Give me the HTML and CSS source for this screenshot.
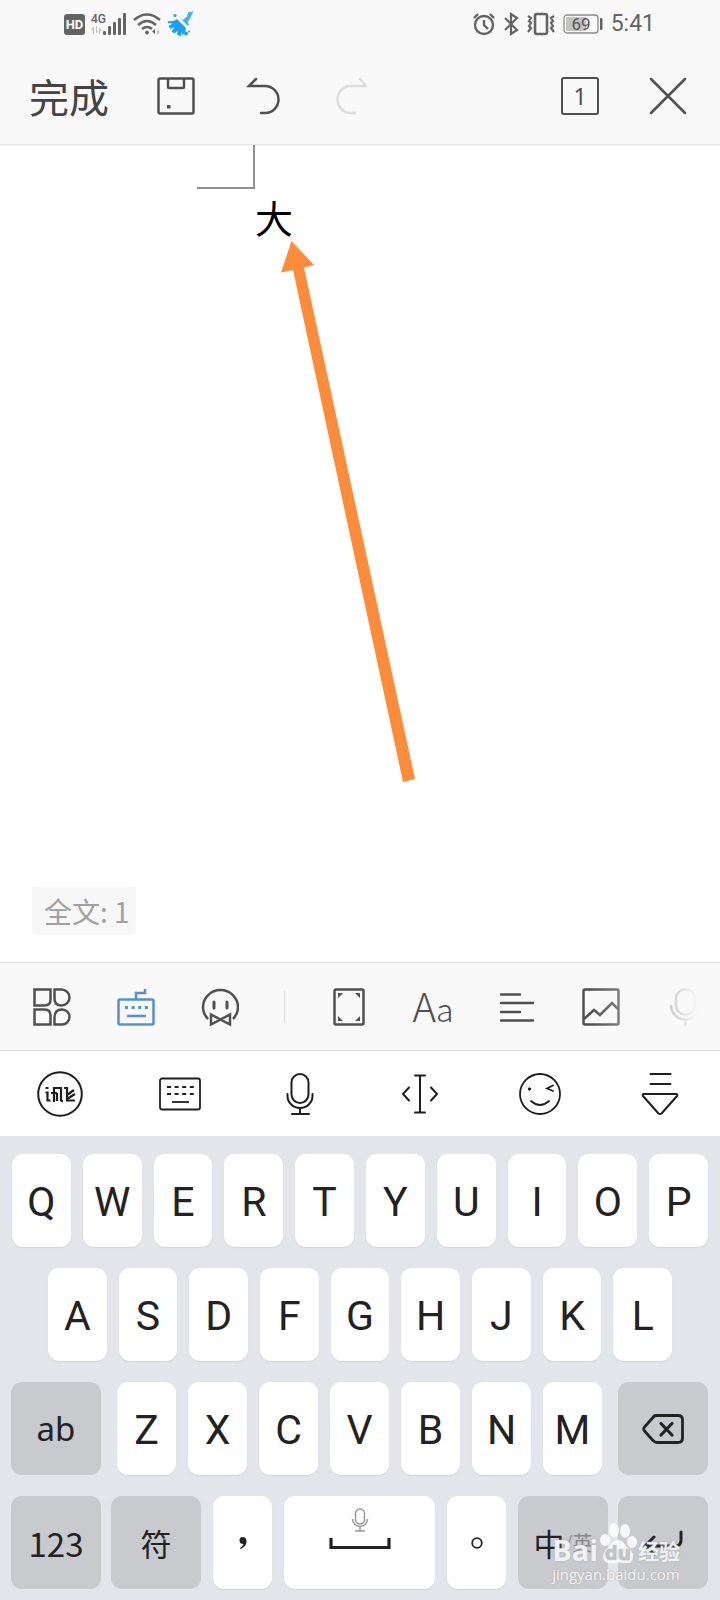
FILE: index.html
```html
<!DOCTYPE html>
<html lang="zh-CN">
<head>
<meta charset="utf-8">
<meta name="viewport" content="width=device-width, initial-scale=1">
<title>文档编辑</title>
<link rel="stylesheet" href="styles.css">
</head>
<body>
<div class="screen">
  <header class="header">
    <div class="status">
      <div class="status-left">
        <span class="hd">HD</span>
        <svg width="36" height="24" viewBox="0 0 36 24" fill="#646464"><text x="0" y="11" font-family="Roboto" font-weight="500" font-size="12">4G</text><g fill="#c4c4c4"><path d="M3 14v8H2v-4H0zM5 14v8l2-3H6v-5zM8 15v7h1v-3h2z"/></g><rect x="12" y="19" width="3" height="4" rx="1"/><rect x="17" y="14" width="3" height="9" rx="1"/><rect x="22" y="10" width="3" height="13" rx="1"/><rect x="27" y="6" width="3" height="17" rx="1"/><rect x="32" y="1" width="3" height="22" rx="1"/></svg>
        <svg width="28" height="24" viewBox="0 0 28 24" fill="none" stroke="#646464" stroke-width="2.400"><path d="M1 8Q14-3 27 8M5 13Q14 5 23 13M9 17Q14 13 19 17"/><circle cx="14" cy="20.500" r="1.500" fill="#646464" stroke-width="1"/><path d="M22 17v5l-3-2.500z" fill="#646464" stroke="none"/><path d="M24 17v6l3-3z" fill="#c4c4c4" stroke="none"/></svg>
        <svg width="26" height="26" viewBox="0 0 26 26" fill="#1b9fee"><path d="M25 1.500q-1.500-1.500-4 0l-1 4-4 3.500-3-2 8 8 1-1.500-1.500-2.500 2.500-3.500 1-2.500q3-3.500 1-5.500z" fill="#38b6ee"/><path d="M10 8l9 9-1 4-2.500 3.500-1.500-4 0 5-4-2 .5-4-3 3-3-2 3-4.500-4 2-2-3 4-2.500-5-.5 1-2q5 1 8.500-2z"/><circle cx="8" cy="4.500" r="1.600"/><circle cx="19" cy="22.500" r="2"/><circle cx="22" cy="20.500" r="1"/></svg>
      </div>
      <div class="status-right">
        <svg width="22" height="24" viewBox="0 0 22 24" fill="none" stroke="#646464" stroke-width="2.400"><circle cx="11" cy="13" r="9"/><path d="M11 8v5l4 4M1 6l4-4M21 6l-4-4"/></svg>
        <svg width="16" height="24" viewBox="0 0 16 24" fill="none" stroke="#646464" stroke-width="2.200"><path d="M2 6l12 12-6 4V2l6 4L2 18"/></svg>
        <svg width="28" height="24" viewBox="0 0 28 24" fill="none" stroke="#646464" stroke-width="2.200"><rect x="8" y="2" width="12" height="20" rx="2" stroke-width="2.600"/><path d="M1 4l3 2-2 3 2 2-2 3 2 2-3 4M27 4l-3 2 2 3-2 2 2 3-2 2 3 4"/></svg>
        <svg width="40" height="22" viewBox="0 0 40 22"><rect x="1" y="2" width="34" height="18" rx="3" fill="none" stroke="#8c8c8c" stroke-width="1.300"/><rect x="3" y="4" width="20" height="14" rx="1" fill="#c3c3c3"/><rect x="37" y="5" width="2.500" height="12" rx="1" fill="#646464"/><text x="18" y="17" text-anchor="middle" font-family="Roboto" font-size="17" fill="#555">69</text></svg>
        <time class="clock">5:41</time>
      </div>
    </div>
    <div class="actions">
      <button class="done" type="button">完成</button>
      <button class="icon-button" type="button" aria-label="保存"><svg width="38" height="38" viewBox="0 0 38 38" fill="none" stroke="#505050" stroke-width="2.500"><rect x="1.500" y="1.500" width="35" height="35" rx="1.500"/><path d="M11 2v8q0 1 1 1h14q1 0 1-1V2"/><rect x="10" y="28" width="3.500" height="3.500" fill="#505050" stroke="none"/></svg></button>
      <button class="icon-button" type="button" aria-label="撤销"><svg width="38" height="38" viewBox="0 0 38 38" fill="none" stroke="#505050" stroke-width="2.500" stroke-linecap="round"><path d="M13 2L6 9h16a13.500 13.500 0 0 1 0 27h-4"/></svg></button>
      <button class="icon-button" type="button" aria-label="重做" disabled><svg width="38" height="38" viewBox="0 0 38 38" fill="none" stroke="#dcdcdc" stroke-width="2.500" stroke-linecap="round"><path d="M31 2l6 7H22a13.500 13.500 0 0 0 0 27h4"/></svg></button>
      <button class="icon-button windows" type="button" aria-label="窗口 1"><span class="window-count">1</span></button>
      <button class="icon-button" type="button" aria-label="关闭"><svg width="38" height="38" viewBox="0 0 38 38" fill="none" stroke="#505050" stroke-width="2.500" stroke-linecap="round"><path d="M2 2l34 34M36 2L2 36"/></svg></button>
    </div>
  </header>

  <main class="document">
    <div class="page-corner"></div>
    <p class="page-text">大</p>
    <svg class="pointer" width="136" height="544" viewBox="0 0 136 544" fill="#fd8c3a"><path d="M11.500 0L34 24l-10 2.500L135 538l-12 3L13 29 1 31.500z"/></svg>
    <p class="word-count">全文: 1</p>
  </main>

  <nav class="tools" aria-label="编辑工具">
    <button class="icon-button" type="button" aria-label="工具"><svg width="38" height="38" viewBox="0 0 38 38" fill="none" stroke="#505050" stroke-width="2.500"><path d="M1.500 1.500h16v10q0 6-6 6h-10zM1.500 21.500h10q6 0 6 6v9h-16zM21.500 1.500h7a8 8 0 0 1 0 16q-7 0-7-7zM29 21.500a7.500 7.500 0 0 1 0 15h-7.500v-7q0-8 7.500-8z"/></svg></button>
    <button class="icon-button" type="button" aria-label="键盘"><svg width="38" height="38" viewBox="0 0 38 38" fill="none" stroke="#568fd2" stroke-width="2.500"><rect x="1.500" y="11.500" width="35" height="25" rx="1.500"/><path d="M19 11V5h9V1M10 28h19"/><path d="M8 19.500h23" stroke-width="3" stroke-dasharray="3 3.600"/></svg></button>
    <button class="icon-button" type="button" aria-label="助手"><svg width="38" height="38" viewBox="0 0 38 38" fill="none" stroke="#505050" stroke-width="2.500"><path d="M7 31a17.500 17 0 1 1 25 0M10 26.500v10l19-10v10z"/><path d="M13 14v6M26 14v6" stroke-width="3" stroke-linecap="round"/></svg></button>
    <span class="divider"></span>
    <button class="icon-button" type="button" aria-label="适应页面"><svg width="38" height="38" viewBox="0 0 38 38" fill="none" stroke="#505050" stroke-width="2.500"><rect x="4.500" y="1.500" width="29" height="35" rx="1.500"/><path d="M8 5h5l-5 5zM30 5h-5l5 5zM8 33h5l-5-5zM30 33h-5l5-5z" fill="#505050" stroke="none"/></svg></button>
    <button class="icon-button font" type="button" aria-label="字体">A<span class="font-small">a</span></button>
    <button class="icon-button" type="button" aria-label="对齐"><svg width="38" height="38" viewBox="0 0 38 38" fill="none" stroke="#505050" stroke-width="2.500" stroke-linecap="round"><path d="M3 6.500h19M3 15h32M3 24h19M3 32.500h32"/></svg></button>
    <button class="icon-button" type="button" aria-label="图片"><svg width="38" height="38" viewBox="0 0 38 38" fill="none" stroke="#505050" stroke-width="2.500"><rect x="1.500" y="1.500" width="35" height="35" rx="1.500"/><path d="M2 31l10-9 6 5 12-12 6 6"/></svg></button>
    <button class="icon-button" type="button" aria-label="语音"><svg width="38" height="38" viewBox="0 0 38 38" fill="none" stroke="#505050" stroke-width="2.500"><rect x="10" y="1.500" width="19" height="25" rx="9"/><path d="M5 17a14.500 14.500 0 0 0 29 0M19.500 32v6"/></svg></button>
  </nav>

  <nav class="ime" aria-label="输入法工具">
    <button class="ime-button" type="button" aria-label="讯飞"><svg width="46" height="46" viewBox="0 0 46 46" fill="none" stroke="#1e1e1e" stroke-width="2"><circle cx="23" cy="23" r="21.800"/><path d="M8.500 17h3M8.500 21.500h2v8h3M17 31V17h7v12M14 22h6M20 22v8M27 17h3v12.500h8M24 29q0 1 2 1M30 24l7-5M30 28l8-5" stroke-width="2.200"/></svg></button>
    <button class="ime-button" type="button" aria-label="键盘切换"><svg width="42" height="34" viewBox="0 0 42 34" fill="none" stroke="#1e1e1e" stroke-width="1.800"><rect x="1" y="1.500" width="40" height="31" rx="2"/><path d="M8 10h28M8 17h28" stroke-width="2.200" stroke-dasharray="4 3.600"/><path d="M13 25h17"/></svg></button>
    <button class="ime-button" type="button" aria-label="语音输入"><svg width="28" height="44" viewBox="0 0 28 44" fill="none" stroke="#1e1e1e" stroke-width="2" stroke-linecap="round"><rect x="5.500" y="2" width="17" height="29" rx="8.500"/><path d="M1.500 22v2a12.500 12 0 0 0 25 0v-2M14 36v6M6 42h17"/></svg></button>
    <button class="ime-button" type="button" aria-label="移动光标"><svg width="38" height="40" viewBox="0 0 38 40" fill="none" stroke="#1e1e1e" stroke-width="2" stroke-linecap="round"><path d="M19 1.500v37M14 1.500h10M14 38.500h10M8 13.500l-6 6.500 6 6.500M30 13.500l6 6.500-6 6.500"/></svg></button>
    <button class="ime-button" type="button" aria-label="表情"><svg width="42" height="42" viewBox="0 0 42 42" fill="none" stroke="#1e1e1e" stroke-width="1.800" stroke-linecap="round"><circle cx="21" cy="21" r="20"/><path d="M12 28q9 8 18 0M34 12.500l-6 3 6 2.500"/><circle cx="10.500" cy="16" r="1.200" fill="#1e1e1e" stroke-width="1"/></svg></button>
    <button class="ime-button" type="button" aria-label="收起键盘"><svg width="38" height="44" viewBox="0 0 38 44" fill="none" stroke="#1e1e1e" stroke-width="2" stroke-linecap="round" stroke-linejoin="round"><path d="M9.500 2h20M9.500 12h20M3 22h32q2 0 1 2L20.500 41.500q-1.500 1-3 0L2 24q-1-2 1-2z"/></svg></button>
  </nav>

  <section class="keyboard" aria-label="键盘">
    <div class="row row-top">
      <button class="key" type="button">Q</button><button class="key" type="button">W</button><button class="key" type="button">E</button><button class="key" type="button">R</button><button class="key" type="button">T</button><button class="key" type="button">Y</button><button class="key" type="button">U</button><button class="key" type="button">I</button><button class="key" type="button">O</button><button class="key" type="button">P</button>
    </div>
    <div class="row row-middle">
      <button class="key" type="button">A</button><button class="key" type="button">S</button><button class="key" type="button">D</button><button class="key" type="button">F</button><button class="key" type="button">G</button><button class="key" type="button">H</button><button class="key" type="button">J</button><button class="key" type="button">K</button><button class="key" type="button">L</button>
    </div>
    <div class="row row-lower">
      <button class="key dark" type="button">ab</button>
      <div class="letters">
        <button class="key" type="button">Z</button><button class="key" type="button">X</button><button class="key" type="button">C</button><button class="key" type="button">V</button><button class="key" type="button">B</button><button class="key" type="button">N</button><button class="key" type="button">M</button>
      </div>
      <button class="key dark" type="button" aria-label="删除"><svg width="42" height="30" viewBox="0 0 42 30" fill="none" stroke="#222" stroke-width="2.800" stroke-linecap="round" stroke-linejoin="round"><path d="M13 1.500h23q4.500 0 4.500 4.500v18q0 4.500-4.500 4.500H15q-2 0-4-2L2.500 17q-1.500-2 0-4L11 3.500q1-2 4-2z"/><path d="M19 9.500l11 11.500M30 9.500L19 21" stroke-width="3.200"/></svg></button>
    </div>
    <div class="row row-bottom">
      <div class="pair"><button class="key dark number" type="button">123</button><button class="key dark symbol" type="button">符</button></div>
      <div class="letters">
        <button class="key punct" type="button" aria-label="逗号"><svg width="10" height="14" viewBox="0 0 10 14" fill="#222"><path d="M4.500 1q4 0 4 4.500 0 5-6 7.500l-.5-1q3-1.500 3.500-4-4 0-4-3.500Q1.500 1 4.500 1z"/></svg></button>
        <button class="key space" type="button" aria-label="空格"><svg width="62" height="42" viewBox="0 0 62 42" fill="none"><g stroke="#999" stroke-width="1.500"><rect x="26.500" y="1" width="9" height="15" rx="4.500"/><path d="M23.500 11a7.500 7.500 0 0 0 15 0M31 19v4M26 23h10"/></g><path d="M2 30v9.500h58V30" stroke="#222" stroke-width="3.200"/></svg></button>
        <button class="key punct" type="button" aria-label="句号"><svg width="12" height="12" viewBox="0 0 12 12" fill="none" stroke="#222" stroke-width="1.800"><circle cx="6" cy="6" r="4.800"/></svg></button>
      </div>
      <div class="pair"><button class="key dark symbol" type="button">中<span class="alternate">/英</span></button><button class="key dark" type="button" aria-label="回车"><svg width="40" height="26" viewBox="0 0 40 26" fill="none" stroke="#222" stroke-width="3" stroke-linecap="round"><path d="M38 2v8q0 6-6 6H3M11 7l-9 9 9 8"/></svg></button></div>
    </div>
    <div class="watermark">
      <div class="brand"><span>Bai</span><svg width="38" height="44" viewBox="0 0 38 44"><g fill="#fff" fill-opacity=".85"><ellipse cx="15" cy="8" rx="5" ry="7"/><ellipse cx="26" cy="9" rx="5" ry="7"/><ellipse cx="6" cy="18" rx="5" ry="6"/><ellipse cx="33" cy="20" rx="5" ry="6"/><path d="M19 18q5 0 8 6 7 5 7 10 0 8-8 7-7-1-13 0-8 1-9-6 0-6 7-11 3-6 8-6z"/></g><text x="19" y="38" text-anchor="middle" font-family="Open Sans" font-weight="700" font-size="20" fill="#c2c3c7">du</text></svg><span class="brand-cn">经验</span></div>
      <div class="site">jingyan.baidu.com</div>
    </div>
  </section>
</div>
</body>
</html>
```
FILE: styles.css
```css
* { box-sizing: border-box; }

body {
  margin: 0;
  background: #fff;
  color: #505050;
  font-family: Roboto, "Noto Sans CJK SC", sans-serif;
}

p { margin: 0; }

button {
  margin: 0;
  padding: 0;
  border: 0;
  background: none;
  color: inherit;
  font: inherit;
}

svg { display: block; flex: none; }

.screen {
  display: flex;
  flex-direction: column;
  min-height: 100vh;
}

.header {
  background: #f9f9f9;
  border-bottom: 1px solid #e4e4e4;
  box-shadow: 0 1px 2px #f0f0f0;
}

.status {
  display: flex;
  align-items: center;
  justify-content: space-between;
  height: 48px;
  padding: 0 65px 0 64px;
}

.status-left, .status-right {
  display: flex;
  align-items: center;
}

.status-left { gap: 6px; }

.status-right { gap: 8px; }

.hd {
  width: 21px;
  border-radius: 3px;
  background: #646464;
  color: #fff;
  font-size: 13px;
  font-weight: 700;
  line-height: 21px;
  text-align: center;
}

.clock {
  color: #646464;
  font-size: 23px;
  line-height: 28px;
}

.actions {
  display: flex;
  align-items: center;
  gap: 48px;
  height: 96px;
  padding: 0 33px 0 29px;
}

.done {
  color: #444;
  font-family: "Noto Sans CJK SC", sans-serif;
  font-size: 40px;
  line-height: 56px;
}

.icon-button {
  display: flex;
  flex: none;
  align-items: center;
  justify-content: center;
  width: 38px;
  height: 38px;
}

.windows {
  margin-right: 2px;
  margin-left: auto;
  border: 2px solid #505050;
  border-radius: 3px;
}

.window-count {
  font-family: "Noto Sans", sans-serif;
  font-size: 23px;
  line-height: 32px;
}

.document {
  position: relative;
  display: flex;
  flex: 1;
  flex-direction: column;
  align-items: flex-start;
  padding: 0 32px 27px 197px;
}

.page-corner {
  width: 58px;
  height: 44px;
  border-right: 2px solid #8f8f8f;
  border-bottom: 2px solid #8f8f8f;
}

.page-text {
  margin-left: 58px;
  color: #000;
  font-family: "Noto Sans CJK SC", sans-serif;
  font-size: 38px;
  line-height: 56px;
}

.pointer {
  position: absolute;
  top: 96px;
  left: 280px;
}

.word-count {
  margin-top: auto;
  margin-left: -165px;
  padding: 0 6px 0 12px;
  border-radius: 4px;
  background: #f7f7f7;
  color: #a0a0a0;
  font-family: "Noto Sans CJK SC", sans-serif;
  font-size: 28px;
  line-height: 48px;
}

.tools {
  position: relative;
  display: flex;
  align-items: center;
  gap: 46px;
  height: 89px;
  padding-left: 33px;
  overflow: hidden;
  border-top: 1px solid #dcdcdc;
  border-bottom: 1px solid #dcdcdc;
  background: #f9f9f9;
}

.tools::after {
  position: absolute;
  inset: 0;
  background: linear-gradient(to right, #f9f9f900 82%, #f9f9f9 97%);
  content: "";
  pointer-events: none;
}

.divider {
  flex: none;
  width: 1px;
  height: 32px;
  margin: 0 -1px;
  background: #dcdcdc;
}

.font {
  align-items: baseline;
  height: auto;
  font-family: "Noto Sans CJK SC", sans-serif;
  font-size: 40px;
  font-weight: 300;
  line-height: 42px;
}

.font-small { font-size: 32px; }

.ime {
  display: grid;
  grid-template-columns: repeat(6, 1fr);
  height: 85px;
}

.ime-button {
  display: flex;
  align-items: center;
  justify-content: center;
}

.keyboard {
  position: relative;
  display: flex;
  flex-direction: column;
  gap: 21px;
  padding: 18px 12px 11px 11px;
  background: #e4e5ea;
}

.row, .letters, .pair { display: flex; }

.row-top, .row-middle, .letters { gap: 12px; }

.row-top { padding-left: 1px; }

.row-middle { padding: 0 36px 0 37px; }

.row-lower { gap: 16px; }

.row-bottom { gap: 12px; }

.pair { gap: 10px; }

.letters { flex: 1; }

.key {
  display: flex;
  flex: 1 1 0;
  align-items: center;
  justify-content: center;
  height: 93px;
  padding-top: 3px;
  border-radius: 11px;
  background: #fff;
  box-shadow: 0 1px 1px #d3d4d8;
  color: #222;
  font-size: 41px;
  line-height: 48px;
}

.dark {
  flex: none;
  width: 90px;
  padding: 0;
  background: #c9cace;
  box-shadow: none;
  font-family: "Noto Sans", sans-serif;
  font-size: 33px;
}

.symbol, .number {
  font-family: "Noto Sans CJK SC", sans-serif;
  font-size: 31px;
}

.number { font-size: 33px; }

.punct {
  flex: none;
  width: 59px;
  padding: 0;
}

.space {
  align-items: flex-start;
  padding-top: 12px;
}

.alternate {
  color: #888;
  font-size: 20px;
}

.watermark {
  position: absolute;
  right: 40px;
  bottom: 18px;
  color: #ffffffdd;
  font-family: "Open Sans", sans-serif;
  text-shadow: 0 0 2px #a8a8a8;
  pointer-events: none;
}

.brand {
  display: flex;
  align-items: flex-end;
  gap: 1px;
  font-size: 29px;
  font-weight: 700;
  line-height: 32px;
}

.brand-cn {
  font-family: "Noto Sans CJK SC", sans-serif;
  font-size: 21px;
}

.site {
  font-size: 15px;
  line-height: 16px;
}
```
